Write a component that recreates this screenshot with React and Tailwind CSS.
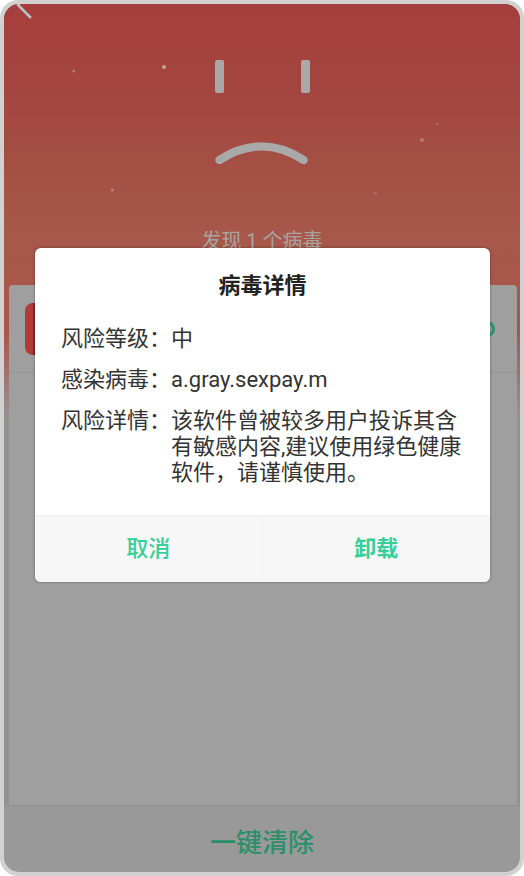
const details = [
  { label: '风险等级：', value: '中' },
  { label: '感染病毒：', value: 'a.gray.sexpay.m' },
  {
    label: '风险详情：',
    value: '该软件曾被较多用户投诉其含有敏感内容,建议使用绿色健康软件，请谨慎使用。',
  },
];

function SadFace() {
  return (
    <svg viewBox="0 0 96 108" className="h-[108px] w-24" fill="none" stroke="#a9a9a9" aria-hidden="true">
      <rect x="1" y="4" width="9" height="33" rx="2" fill="#a9a9a9" stroke="none" />
      <rect x="87" y="4" width="9" height="33" rx="2" fill="#a9a9a9" stroke="none" />
      <path d="M5.500 104C33 86 62 86 89.500 104" strokeWidth="8.500" strokeLinecap="round" />
    </svg>
  );
}

function Sparks() {
  return (
    <svg className="absolute inset-x-0 top-0 h-60 w-full" aria-hidden="true">
      <circle cx="31%" cy="63" r="2" fill="#c5a29d" />
      <circle cx="13.500%" cy="67" r="1.500" fill="#b5776e" />
      <circle cx="21%" cy="186" r="1.500" fill="#bb8176" />
      <circle cx="81%" cy="136" r="2" fill="#b37a6c" />
      <circle cx="84%" cy="120" r="1.500" fill="#ad6558" />
      <circle cx="72%" cy="189" r="1.500" fill="#ad7264" />
    </svg>
  );
}

function DetailDialog() {
  return (
    <div className="absolute inset-0 flex items-start pt-[244px] pr-[30px] pl-[31px]">
      <section
        role="dialog"
        aria-labelledby="dialog-title"
        className="w-full overflow-hidden rounded-md bg-white text-[22px] leading-[26px] text-[#333333] shadow-[0_0_3px_rgba(0,0,0,0.4)]"
      >
        <h2 id="dialog-title" className="pt-[25px] text-center font-bold text-[#222222]">
          病毒详情
        </h2>
        <dl className="flex flex-col gap-[15px] px-[26px] pt-[27px] pb-[29px]">
          {details.map((item) => (
            <div key={item.label} className="flex">
              <dt className="shrink-0">{item.label}</dt>
              <dd className="min-w-0">{item.value}</dd>
            </div>
          ))}
        </dl>
        <div className="grid h-[67px] grid-cols-2 border-t border-[#efefef] bg-[#f7f7f7] text-[#36cf98]">
          <button type="button" className="border-r border-[#f1f1f1] font-medium">
            取消
          </button>
          <button type="button" className="font-bold">
            卸载
          </button>
        </div>
      </section>
    </div>
  );
}

export default function App() {
  return (
    <div className="flex min-h-screen flex-col bg-white font-[Roboto,'Noto_Sans_CJK_SC',sans-serif]">
      <div className="flex grow flex-col rounded-[18px] bg-[#d1d1d1] p-1">
        <div className="relative flex grow flex-col overflow-hidden rounded-[15px] bg-[#999999]">
          <main className="relative flex grow flex-col bg-[linear-gradient(#a53e3c_0px,#a34840_110px,#a7584a_230px,#a9564a_330px,#989090_410px,#929292_430px)]">
            <Sparks />
            <header className="relative flex h-[281px] flex-col">
              <button type="button" aria-label="返回" className="h-14 w-8">
                <svg viewBox="0 0 32 56" className="h-14 w-8" fill="none" stroke="#b8c4c3" strokeWidth="2.500">
                  <path d="M20 -6L14 1L27 14" />
                </svg>
              </button>
              <div className="flex justify-center">
                <div className="-mt-1 flex flex-col items-center">
                  <SadFace />
                  <p className="pt-16 text-xl leading-[26px] text-[#a9a4a2]">发现 1 个病毒</p>
                </div>
              </div>
            </header>
            <section className="mr-[3px] ml-[5px] grow rounded-t bg-[#9f9f9f]">
              <div className="flex h-[88px] items-center justify-between border-b border-[#959595] pr-[22px] pl-4">
                <span className="h-[52px] w-[52px] rounded-lg border-l-8 border-[#b03b38] bg-[#842a2a]" />
                <span className="h-4 w-4 rounded-full border-[3px] border-[#2b946d]" />
              </div>
            </section>
          </main>
          <footer className="flex h-[67px] border-t border-[#919191]">
            <button type="button" className="grow pt-2 text-[26px] font-medium text-[#2b8f69]">
              一键清除
            </button>
          </footer>
          <DetailDialog />
        </div>
      </div>
    </div>
  );
}
